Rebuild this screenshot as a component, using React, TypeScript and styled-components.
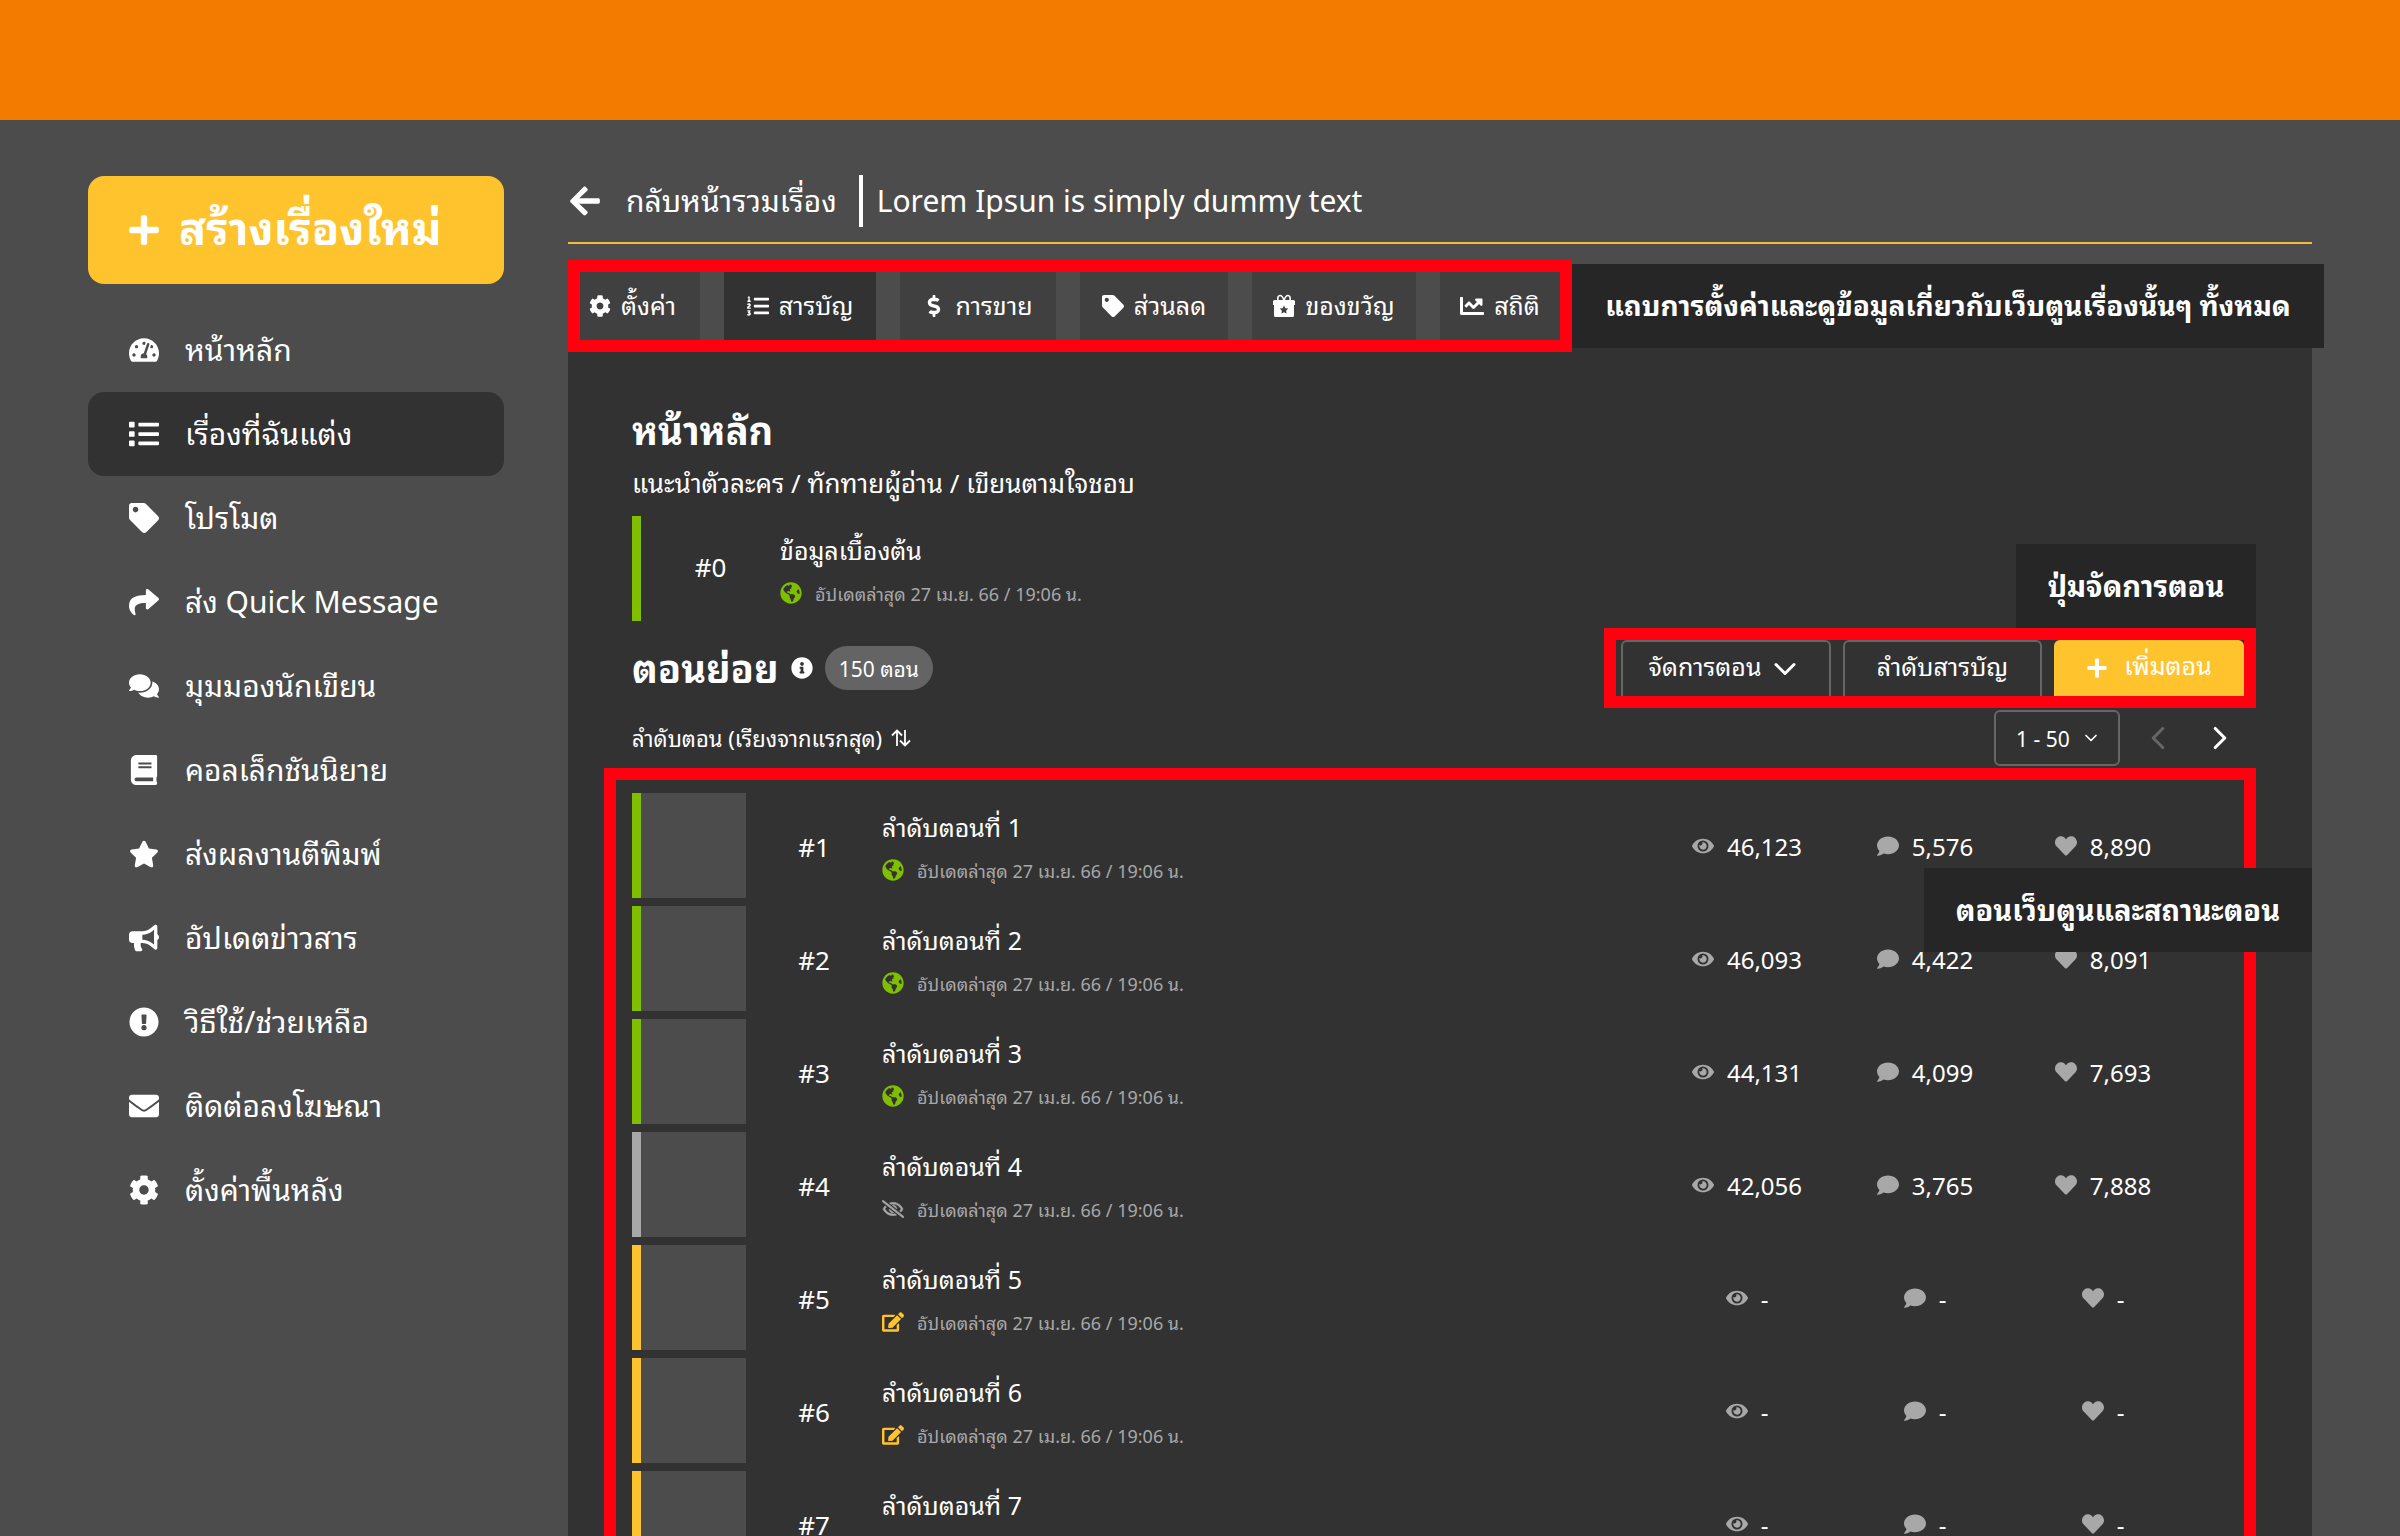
import React from "react";
import styled, { createGlobalStyle } from "styled-components";
import {
  FaArrowLeft, FaBook, FaBullhorn, FaChartLine, FaCog, FaComment, FaComments, FaDollarSign,
  FaEdit, FaEnvelope, FaExclamationCircle, FaEye, FaGlobeAmericas, FaHeart, FaInfoCircle,
  FaList, FaListOl, FaPlus, FaRegEyeSlash, FaShare, FaStar, FaTachometerAlt, FaTag,
} from "react-icons/fa";
import { ChevronDown, ChevronLeft, ChevronRight } from "lucide-react";

const c = {
  orange: "#f37b00", page: "#4c4c4c", panel: "#323232", note: "#262626", tab: "#404040",
  yellow: "#ffc32d", red: "#ff000f", green: "#80be00", muted: "#a8a8a8", line: "#666666",
};

const GlobalStyle = createGlobalStyle`
  *, *::before, *::after { box-sizing: border-box; }
  body {
    margin: 0;
    background: ${c.page};
    color: #fff;
    font-family: "Noto Sans Thai Looped", "Noto Sans Thai", "Noto Sans", sans-serif;
    font-size: 24px;
    line-height: 36px;
  }
  button, select { font: inherit; color: inherit; cursor: pointer; }
  a { color: inherit; text-decoration: none; }
  ul, ol { list-style: none; margin: 0; padding: 0; }
  h1, h2, p { margin: 0; }
  svg { flex: none; display: block; }
`;

const Shell = styled.div`
  height: 100vh;
  overflow: hidden;
  display: flex;
  flex-direction: column;
`;
const TopBar = styled.header`
  flex: none;
  height: 120px;
  background: ${c.orange};
`;
const Body = styled.div`
  flex: 1;
  min-height: 0;
  display: grid;
  grid-template-columns: 416px minmax(0, 1fr);
  gap: 64px;
  padding: 0 88px;
`;
/* Thai glyphs sit low in their line box; the padding centres them beside icons. */
const Label = styled.span`
  display: block;
  padding-bottom: 4px;
`;

const Sidebar = styled.aside`
  padding-top: 56px;
  display: flex;
  flex-direction: column;
  gap: 24px;
`;
const CreateButton = styled.button`
  display: flex;
  align-items: center;
  gap: 18px;
  height: 108px;
  padding: 0 39px;
  border: 0;
  border-radius: 16px;
  background: ${c.yellow};
  font-size: 45px;
  font-weight: 700;
  line-height: 60px;
  white-space: nowrap;
  ${Label} { padding-bottom: 10px; }
`;
const NavLink = styled.a<{ $active?: boolean }>`
  display: flex;
  align-items: center;
  gap: 26px;
  height: 84px;
  padding: 0 41px;
  border-radius: 16px;
  background: ${(p) => (p.$active ? c.panel : "transparent")};
  font-size: 30px;
  line-height: 44px;
  white-space: nowrap;
`;

const Main = styled.main`
  display: flex;
  flex-direction: column;
  min-width: 0;
`;
const TitleBar = styled.div`
  flex: none;
  display: flex;
  align-items: center;
  height: 124px;
  padding-top: 40px;
  margin-bottom: 16px;
  border-bottom: 2px solid #f0bd3a;
  font-size: 30px;
  line-height: 44px;
  white-space: nowrap;
`;
const BackLink = styled.a`
  display: flex;
  align-items: center;
  gap: 24px;
`;
const StoryTitle = styled.h1`
  margin-left: 22px;
  padding-left: 14px;
  border-left: 4px solid #fff;
  font-size: 30px;
  font-weight: 400;
  line-height: 48px;
`;
const TabRow = styled.div`
  position: relative;
  z-index: 1;
  flex: none;
  display: flex;
  align-items: center;
  margin-right: -12px;
`;
const Tabs = styled.nav`
  flex: none;
  display: flex;
  gap: 24px;
  height: 92px;
  border: 12px solid ${c.red};
  background: ${c.page};
`;
const Tab = styled.a<{ $width: number; $active?: boolean }>`
  display: flex;
  align-items: center;
  justify-content: center;
  gap: 10px;
  width: ${(p) => p.$width}px;
  background: ${(p) => (p.$active ? c.panel : c.tab)};
  font-size: 25px;
  white-space: nowrap;
  &:first-child {
    justify-content: flex-start;
    padding-left: 9px;
  }
`;
const Note = styled.strong<{ $width?: number }>`
  display: flex;
  align-items: center;
  justify-content: center;
  height: 84px;
  padding-bottom: 4px;
  width: ${(p) => (p.$width ? `${p.$width}px` : "auto")};
  flex: ${(p) => (p.$width ? "none" : "1")};
  background: ${c.note};
  font-size: ${(p) => (p.$width ? 29 : 28)}px;
  font-weight: 700;
  white-space: nowrap;
`;

const Panel = styled.section`
  flex: 1;
  min-height: 0;
  display: flex;
  flex-direction: column;
  margin-top: -12px;
  padding: 58px 56px 0 64px;
  background: ${c.panel};
`;
const SectionTitle = styled.h2`
  font-size: 38px;
  font-weight: 700;
  line-height: 60px;
`;
const Intro = styled.p`
  padding: 5px 0 17px;
  font-size: 26px;
`;

const EntryRow = styled.div<{ $tone: string }>`
  display: flex;
  align-items: center;
  height: 105px;
  border-left: 9px solid ${(p) => p.$tone};
`;
const Thumb = styled.div`
  width: 105px;
  align-self: stretch;
  background: ${c.page};
`;
const Order = styled.span<{ $wide?: boolean }>`
  width: ${(p) => (p.$wide ? 139 : 136)}px;
  padding-bottom: ${(p) => (p.$wide ? 8 : 2)}px;
  text-align: center;
  font-size: 26px;
`;
const EntryText = styled.div`
  flex: 1;
  min-width: 0;
  display: flex;
  flex-direction: column;
  gap: 8px;
  padding-top: 4px;
  font-size: 25px;
`;
const Updated = styled.span<{ $tone: string }>`
  display: flex;
  align-items: center;
  gap: 13px;
  color: ${c.muted};
  font-size: 18px;
  svg { color: ${(p) => p.$tone}; }
`;
const Stat = styled.span`
  width: 178px;
  display: flex;
  align-items: center;
  justify-content: center;
  gap: 13px;
  svg { color: ${c.muted}; }
  ${Label} { padding-bottom: 2px; }
`;

const Toolbar = styled.div`
  position: relative;
  display: flex;
  align-items: center;
  height: 80px;
  margin-top: 7px;
`;
const InfoMark = styled.span`
  margin: 0 12px;
`;
const Count = styled.span`
  height: 44px;
  padding: 0 14px;
  border-radius: 22px;
  background: #646464;
  font-size: 21px;
  line-height: 44px;
`;
const Actions = styled.div`
  display: flex;
  gap: 12px;
  height: 80px;
  margin-left: auto;
  padding-left: 5px;
  border: 12px solid ${c.red};
`;
const ActionButton = styled.button<{ $width: number; $primary?: boolean }>`
  display: flex;
  align-items: center;
  justify-content: center;
  gap: ${(p) => (p.$primary ? 16 : 6)}px;
  width: ${(p) => p.$width}px;
  padding: 0;
  border: ${(p) => (p.$primary ? "0" : `2px solid ${c.line}`)};
  border-bottom: 0;
  border-radius: 6px 6px 0 0;
  background: ${(p) => (p.$primary ? c.yellow : "transparent")};
  font-size: 25px;
  white-space: nowrap;
  ${Label} { padding-bottom: 8px; }
`;
const ToolbarNote = styled.div`
  position: absolute;
  right: 0;
  bottom: 100%;
`;
const ListNote = styled.div`
  position: absolute;
  right: -68px;
  top: 88px;
`;

const SortRow = styled.div`
  display: flex;
  align-items: center;
  height: 60px;
`;
const SortButton = styled.button`
  display: flex;
  align-items: center;
  gap: 9px;
  padding: 0;
  border: 0;
  background: none;
  font-size: 22px;
  ${Label} { padding-bottom: 2px; }
`;
const RangeBox = styled.label`
  display: flex;
  align-items: center;
  gap: 8px;
  height: 56px;
  margin-left: auto;
  padding: 0 17px 0 20px;
  border: 2px solid ${c.line};
  border-radius: 6px;
`;
const Range = styled.select`
  appearance: none;
  width: 57px;
  padding: 0;
  border: 0;
  background: transparent;
  font-size: 21px;
`;
const Pagers = styled.div`
  display: flex;
  gap: 22px;
  padding: 0 16px 0 18px;
`;
const Pager = styled.button`
  display: flex;
  align-items: center;
  justify-content: center;
  width: 40px;
  height: 56px;
  padding: 0;
  border: 0;
  background: none;
  &:disabled { color: ${c.line}; }
`;

const ListFrame = styled.div`
  position: relative;
  flex: none;
  margin-left: -28px;
  padding: 13px 52px 24px 16px;
  border: 12px solid ${c.red};
`;
const EntryList = styled.ol`
  display: flex;
  flex-direction: column;
  gap: 8px;
`;

const GiftIcon = () => (
  <svg width="22" height="24" viewBox="0 0 22 24" fill="currentColor" aria-hidden="true">
    <path fillRule="evenodd" d="M1.500 6h19q1.500 0 1.500 1.500V11H0V7.500Q0 6 1.500 6zM1 11h20v10.500q0 1.500-1.500 1.500h-17Q1 23 1 21.500V11zm10 .5l-1.300 2.700-3 .4 2.200 2.100-.5 2.900 2.600-1.400 2.600 1.400-.5-2.900 2.200-2.100-3-.4z" />
    <path fill="none" stroke="currentColor" strokeWidth="1.600" d="M11 6.500Q9.500 1.500 7 1.500T4.800 6M11 6.500q1.500-5 4-5t2.200 4.500" />
  </svg>
);
const SortIcon = () => (
  <svg width="20" height="18" viewBox="0 0 20 18" fill="none" stroke="currentColor" strokeWidth="1.800" aria-hidden="true">
    <path d="M6 17V1.500M1 6.500l5-5 5 5M14 1v15.500M9 11.500l5 5 5-5" />
  </svg>
);
const HiddenIcon = ({ size }: { size: number }) => (
  <FaRegEyeSlash size={size} stroke="currentColor" strokeWidth={18} />
);

const nav = [
  { icon: FaTachometerAlt, text: "หน้าหลัก" },
  { icon: FaList, text: "เรื่องที่ฉันแต่ง", active: true },
  { icon: FaTag, text: "โปรโมต" },
  { icon: FaShare, text: "ส่ง Quick Message" },
  { icon: FaComments, text: "มุมมองนักเขียน" },
  { icon: FaBook, text: "คอลเล็กชันนิยาย" },
  { icon: FaStar, text: "ส่งผลงานตีพิมพ์" },
  { icon: FaBullhorn, text: "อัปเดตข่าวสาร" },
  { icon: FaExclamationCircle, text: "วิธีใช้/ช่วยเหลือ" },
  { icon: FaEnvelope, text: "ติดต่อลงโฆษณา" },
  { icon: FaCog, text: "ตั้งค่าพื้นหลัง" },
];

const tabs = [
  { icon: <FaCog size={22} />, text: "ตั้งค่า", width: 120 },
  { icon: <FaListOl size={22} />, text: "สารบัญ", width: 152, active: true },
  { icon: <FaDollarSign size={22} />, text: "การขาย", width: 156 },
  { icon: <FaTag size={22} />, text: "ส่วนลด", width: 148 },
  { icon: <GiftIcon />, text: "ของขวัญ", width: 164 },
  { icon: <FaChartLine size={24} />, text: "สถิติ", width: 120 },
];

type Status = "public" | "hidden" | "draft";
const statuses = {
  public: { tone: c.green, icon: FaGlobeAmericas },
  hidden: { tone: c.muted, icon: HiddenIcon },
  draft: { tone: c.yellow, icon: FaEdit },
};
const episodes: { status: Status; stats: string[] }[] = [
  { status: "public", stats: ["46,123", "5,576", "8,890"] },
  { status: "public", stats: ["46,093", "4,422", "8,091"] },
  { status: "public", stats: ["44,131", "4,099", "7,693"] },
  { status: "hidden", stats: ["42,056", "3,765", "7,888"] },
  { status: "draft", stats: ["-", "-", "-"] },
  { status: "draft", stats: ["-", "-", "-"] },
  { status: "draft", stats: ["-", "-", "-"] },
];
const statIcons = [FaEye, FaComment, FaHeart];

function Entry({ order, title, status, stats }: { order: number; title: string; status: Status; stats?: string[] }) {
  const { tone, icon: Icon } = statuses[status];
  return (
    <EntryRow as={stats ? "li" : "div"} $tone={tone}>
      {stats && <Thumb />}
      <Order $wide={!stats}>#{order}</Order>
      <EntryText>
        <span>{title}</span>
        <Updated $tone={tone}>
          <Icon size={22} />
          อัปเดตล่าสุด 27 เม.ย. 66 / 19:06 น.
        </Updated>
      </EntryText>
      {stats?.map((value, i) => {
        const StatIcon = statIcons[i];
        return (
          <Stat key={i}>
            <StatIcon size={22} />
            <Label>{value}</Label>
          </Stat>
        );
      })}
    </EntryRow>
  );
}

export default function App() {
  return (
    <Shell>
      <GlobalStyle />
      <TopBar />
      <Body>
        <Sidebar>
          <CreateButton type="button">
            <FaPlus size={34} />
            <Label>สร้างเรื่องใหม่</Label>
          </CreateButton>
          <nav>
            {nav.map(({ icon: Icon, text, active }) => (
              <NavLink key={text} href="#" $active={active}>
                <Icon size={30} />
                <Label>{text}</Label>
              </NavLink>
            ))}
          </nav>
        </Sidebar>
        <Main>
          <TitleBar>
            <BackLink href="#">
              <FaArrowLeft size={34} />
              <Label>กลับหน้ารวมเรื่อง</Label>
            </BackLink>
            <StoryTitle><Label>Lorem Ipsun is simply dummy text</Label></StoryTitle>
          </TitleBar>
          <TabRow>
            <Tabs>
              {tabs.map((t) => (
                <Tab key={t.text} href="#" $width={t.width} $active={t.active}>
                  {t.icon}
                  <Label>{t.text}</Label>
                </Tab>
              ))}
            </Tabs>
            <Note>แถบการตั้งค่าและดูข้อมูลเกี่ยวกับเว็บตูนเรื่องนั้นๆ ทั้งหมด</Note>
          </TabRow>
          <Panel>
            <SectionTitle>หน้าหลัก</SectionTitle>
            <Intro>แนะนำตัวละคร / ทักทายผู้อ่าน / เขียนตามใจชอบ</Intro>
            <Entry order={0} title="ข้อมูลเบื้องต้น" status="public" />
            <Toolbar>
              <SectionTitle><Label>ตอนย่อย</Label></SectionTitle>
              <InfoMark><FaInfoCircle size={22} /></InfoMark>
              <Count>150 ตอน</Count>
              <Actions>
                <ActionButton type="button" $width={210}><Label>จัดการตอน</Label><ChevronDown size={36} /></ActionButton>
                <ActionButton type="button" $width={199}><Label>ลำดับสารบัญ</Label></ActionButton>
                <ActionButton type="button" $width={190} $primary><FaPlus size={22} /><Label>เพิ่มตอน</Label></ActionButton>
              </Actions>
              <ToolbarNote><Note $width={240}>ปุ่มจัดการตอน</Note></ToolbarNote>
            </Toolbar>
            <SortRow>
              <SortButton type="button"><Label>ลำดับตอน (เรียงจากแรกสุด)</Label><SortIcon /></SortButton>
              <RangeBox>
                <Range aria-label="ช่วงตอน"><option>1 - 50</option></Range>
                <ChevronDown size={20} />
              </RangeBox>
              <Pagers>
                <Pager type="button" aria-label="ก่อนหน้า" disabled><ChevronLeft size={38} /></Pager>
                <Pager type="button" aria-label="ถัดไป"><ChevronRight size={38} /></Pager>
              </Pagers>
            </SortRow>
            <ListFrame>
              <EntryList>
                {episodes.map((e, i) => (
                  <Entry key={i} order={i + 1} title={`ลำดับตอนที่ ${i + 1}`} status={e.status} stats={e.stats} />
                ))}
              </EntryList>
              <ListNote><Note $width={388}>ตอนเว็บตูนและสถานะตอน</Note></ListNote>
            </ListFrame>
          </Panel>
        </Main>
      </Body>
    </Shell>
  );
}
